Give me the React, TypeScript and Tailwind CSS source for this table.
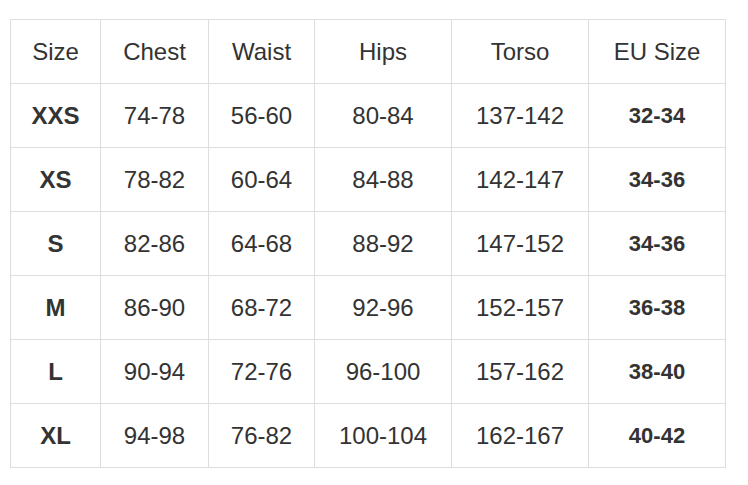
import React from "react";

const header = ["Size", "Chest", "Waist", "Hips", "Torso", "EU Size"];
const rows = [
  ["XXS", "74-78", "56-60", "80-84", "137-142", "32-34"],
  ["XS", "78-82", "60-64", "84-88", "142-147", "34-36"],
  ["S", "82-86", "64-68", "88-92", "147-152", "34-36"],
  ["M", "86-90", "68-72", "92-96", "152-157", "36-38"],
  ["L", "90-94", "72-76", "96-100", "157-162", "38-40"],
  ["XL", "94-98", "76-82", "100-104", "162-167", "40-42"],
];

export default function App() {
  return (
    <div
      className="w-[748px] h-[485px] bg-white pt-[19px] pl-[10px]"
      style={{ fontFamily: '"Liberation Sans", Arial, sans-serif' }}
    >
      <div className="grid grid-cols-[90px_108px_106px_137px_137px_137px] w-[716px] border-r border-b border-[#dddddd] text-[#333333]">
        {header.map((h, i) => (
          <div
            key={"h" + i}
            className="h-[64px] border-t border-l border-[#dddddd] flex items-center justify-center text-[24px]"
          >
            {h}
          </div>
        ))}
        {rows.map((r, ri) =>
          r.map((c, ci) => (
            <div
              key={ri + "-" + ci}
              className={
                "h-[64px] border-t border-l border-[#dddddd] flex items-center justify-center " +
                (ci === 0
                  ? "text-[24px] font-bold"
                  : ci === 5
                  ? "text-[22px] font-bold"
                  : "text-[24px]")
              }
            >
              {c}
            </div>
          ))
        )}
      </div>
    </div>
  );
}
